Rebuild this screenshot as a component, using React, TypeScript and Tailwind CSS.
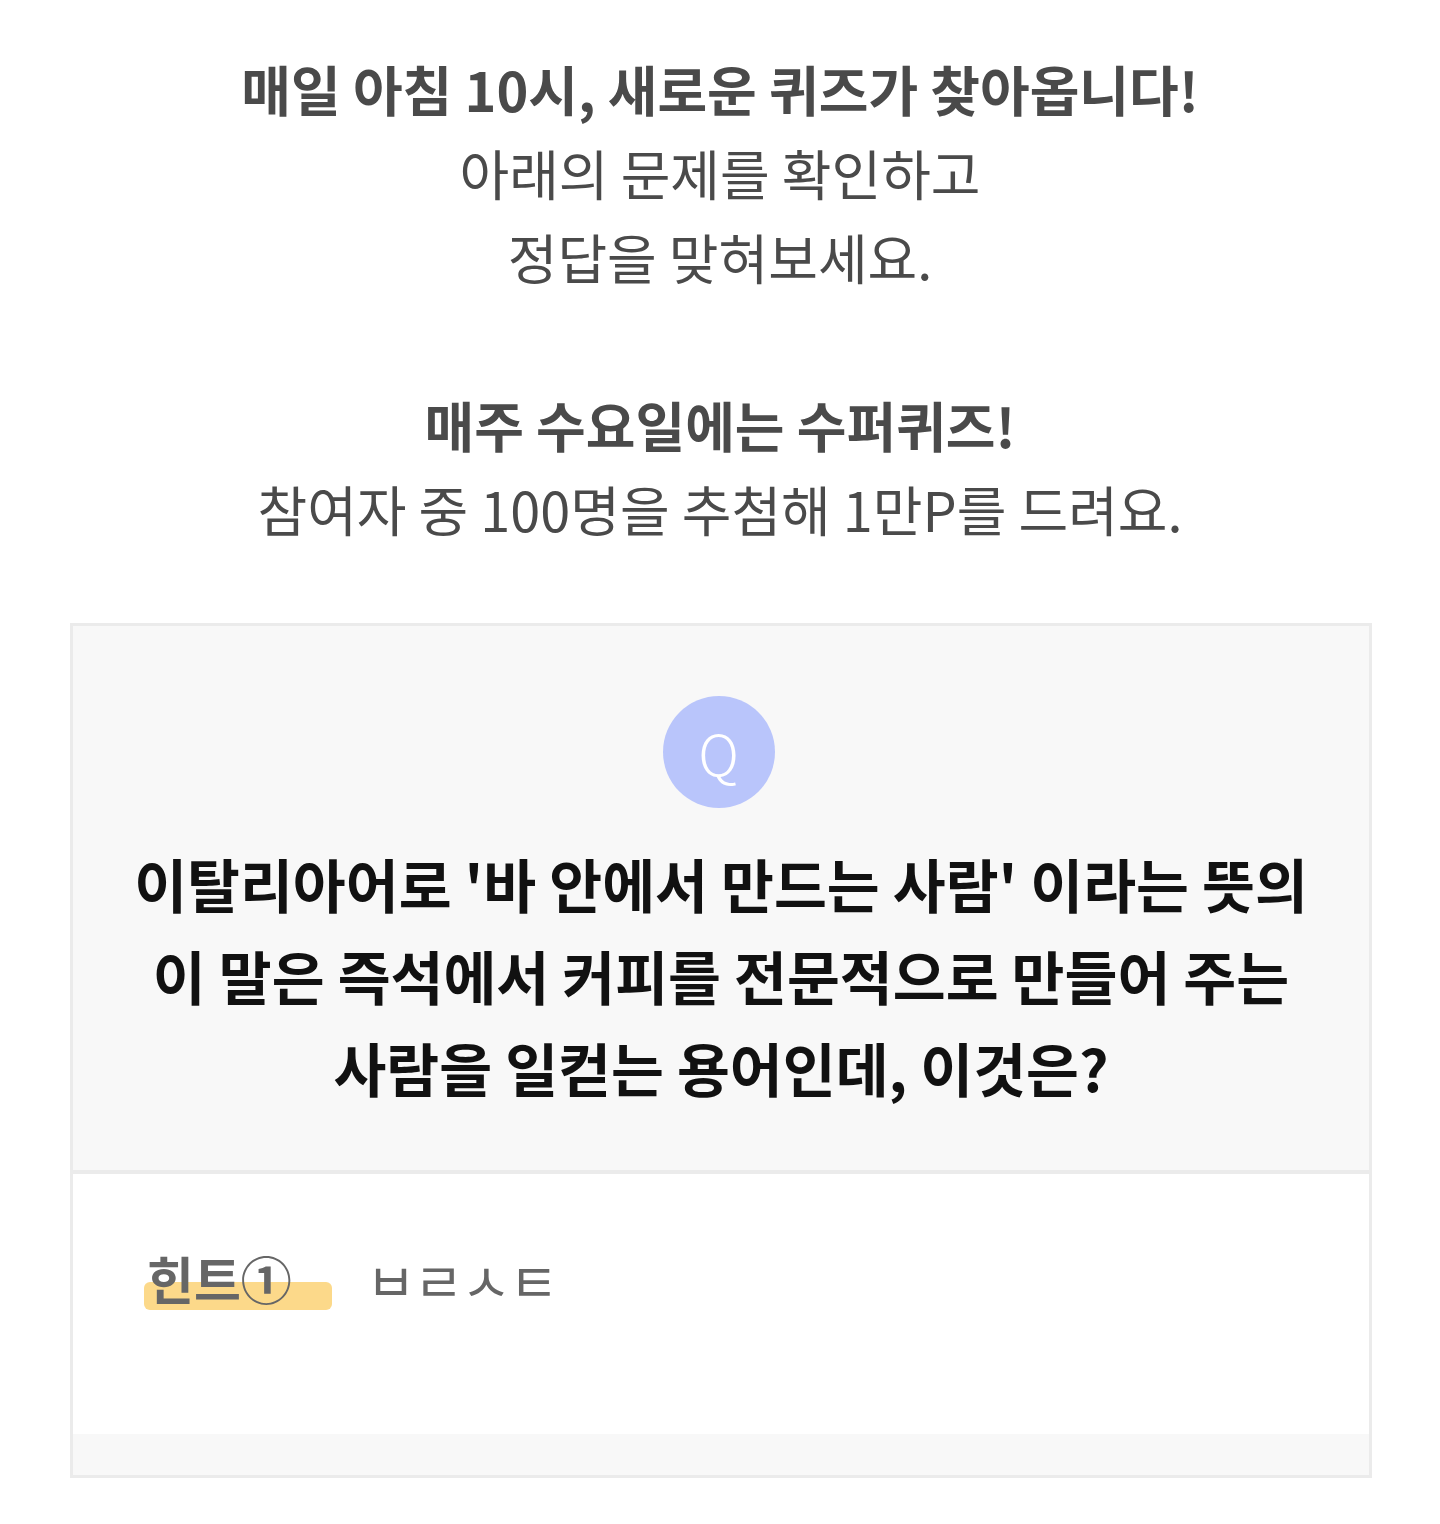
import React from 'react';

const kr = "font-['Noto_Sans_CJK_KR','Noto_Sans',sans-serif]";

function HintRow({ label, answer }: { label: string; answer: string }) {
  return (
    <div className="flex items-center pl-[71px]">
      <div className="relative w-[188px] h-[60px]">
        <div className="absolute left-0 right-0 top-[32px] h-[28px] rounded-[6px] bg-[#fcd98a]" />
        <span className="relative block pl-[3px] text-left text-[51px] leading-[56px] font-bold text-[#666]">
          {label}
        </span>
      </div>
      <span className="ml-[34px] text-[54px] leading-[60px] text-[#666] tracking-[-2px]">{answer}</span>
    </div>
  );
}

export default function App() {
  return (
    <div className={`${kr} min-h-[1524px] bg-white text-center`}>
      {/* Intro */}
      <div className="pt-[47px] text-[54px] leading-[84px] text-[#4a4a4a]">
        <p className="font-bold">매일 아침 10시, 새로운 퀴즈가 찾아옵니다!</p>
        <p>아래의 문제를 확인하고</p>
        <p>정답을 맞혀보세요.</p>
        <p className="h-[84px]" />
        <p className="font-bold">매주 수요일에는 수퍼퀴즈!</p>
        <p>참여자 중 100명을 추첨해 1만P를 드려요.</p>
      </div>

      {/* Quiz card */}
      <div className="mt-[72px] ml-[70px] w-[1302px] border-[3px] border-[#ebebeb] bg-[#f8f8f8]">
        <div className="flex flex-col items-center pt-[70px] pb-[57px] border-b-[4px] border-[#ebebeb]">
          <div className="mr-[5px] w-[112px] h-[112px] rounded-full bg-[#b9c5fb] flex items-center justify-center">
            <span className="text-[56px] leading-none font-light text-white">Q</span>
          </div>
          <p className="mt-[29px] text-[57.5px] leading-[92px] font-bold text-[#111]">
            이탈리아어로 '바 안에서 만드는 사람' 이라는 뜻의
            <br />
            이 말은 즉석에서 커피를 전문적으로 만들어 주는
            <br />
            사람을 일컫는 용어인데, 이것은?
          </p>
        </div>
        <div className="bg-white h-[260px] pt-[76px]">
          <HintRow label="힌트①" answer="ㅂㄹㅅㅌ" />
        </div>
        <div className="h-[41px]" />
      </div>
    </div>
  );
}
